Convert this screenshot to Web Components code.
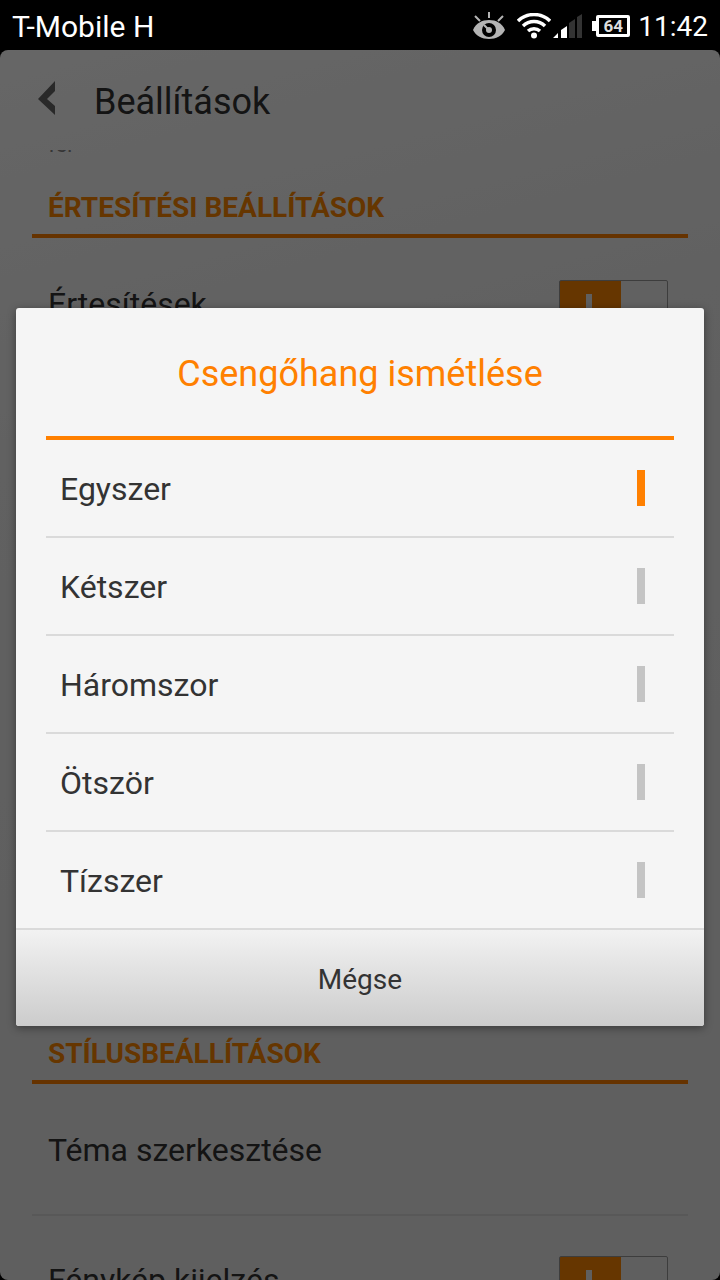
<!DOCTYPE html>
<html lang="hu">
<head>
  <meta charset="utf-8">
  <meta name="viewport" content="width=device-width, initial-scale=1">
  <title>Beállítások</title>
  <style>
    body {
      margin: 0;
      height: 100vh;
      overflow: hidden;
      background: #000;
      font-family: Roboto, "Liberation Sans", sans-serif;
    }
  </style>
</head>
<body>
  <phone-screen>
    <status-bar slot="status" carrier="T-Mobile H" battery="64" time="11:42"></status-bar>

    <settings-page heading="Beállítások">
      <span slot="previous">fel</span>
      <settings-section heading="Értesítési beállítások">
        <settings-row label="Értesítések" toggle></settings-row>
      </settings-section>
      <settings-section class="style" heading="Stílusbeállítások">
        <settings-row label="Téma szerkesztése"></settings-row>
        <settings-row label="Fénykép kijelzés" toggle></settings-row>
      </settings-section>
    </settings-page>

    <choice-dialog slot="dialog" heading="Csengőhang ismétlése" cancel="Mégse">
      <choice-list></choice-list>
    </choice-dialog>
  </phone-screen>

  <script>
    class PhoneScreen extends HTMLElement {
      constructor() {
        super();
        this.attachShadow({ mode: 'open' }).innerHTML = `
          <style>
            :host {
              display: flex;
              flex-direction: column;
              height: 100%;
            }

            main {
              flex: 1;
              min-height: 0;
              position: relative;
              display: flex;
            }

            .overlay {
              position: absolute;
              inset: 0;
              box-sizing: border-box;
              padding: 20px 16px 16px;
              display: grid;
              align-items: center;
              background: rgba(0, 0, 0, 0.6);
            }
          </style>

          <slot name="status"></slot>
          <main>
            <slot></slot>
            <div class="overlay"><slot name="dialog"></slot></div>
          </main>
        `;
      }
    }

    class StatusBar extends HTMLElement {
      connectedCallback() {
        this.attachShadow({ mode: 'open' }).innerHTML = `
          <style>
            :host {
              display: flex;
              align-items: center;
              height: 50px;
              padding: 2px 12px 0;
              box-sizing: border-box;
              color: #fff;
              font-size: 28px;
              line-height: 32px;
            }

            .carrier,
            time {
              padding-top: 2px;
            }

            .carrier {
              flex: 1;
              font-size: 30px;
            }

            svg {
              display: block;
            }

            .eye {
              margin-right: 12px;
            }

            .wifi {
              margin-right: 2px;
            }

            .signal {
              margin-right: 10px;
            }

            .battery {
              display: flex;
              align-items: center;
              margin-right: 8px;
            }

            .battery::before {
              content: "";
              width: 4px;
              height: 10px;
              background: #fff;
            }

            .battery span {
              box-sizing: border-box;
              width: 34px;
              height: 22px;
              border: 3px solid #fff;
              border-radius: 2px;
              color: #ddd;
              font-size: 17px;
              font-weight: 700;
              line-height: 16px;
              text-align: center;
            }
          </style>

          <span class="carrier">${this.getAttribute('carrier')}</span>
          <svg class="eye" width="32" height="28" viewBox="0 0 32 28" aria-hidden="true">
            <path fill="#b4b4b4" d="M0 18C3 11 9 8 16 8s13 3 16 10c-3 6-9 9-16 9S3 24 0 18z"/>
            <circle cx="16" cy="18" r="7" fill="#000"/>
            <circle cx="16" cy="18" r="3" fill="#b4b4b4"/>
            <path stroke="#b4b4b4" stroke-width="2" d="M16 0v6M2 4l5 5M30 4l-5 5M11 13l5 5"/>
          </svg>
          <svg class="wifi" width="34" height="26" viewBox="0 0 34 26" aria-hidden="true">
            <g fill="none" stroke="#fff" stroke-width="3.500">
              <path d="M1 8A23 23 0 0 1 33 8"/>
              <path d="M6 13A16 16 0 0 1 28 13"/>
              <path d="M11 18A9 9 0 0 1 23 18"/>
            </g>
            <circle cx="17" cy="22.500" r="3" fill="#fff"/>
          </svg>
          <svg class="signal" width="29" height="24" viewBox="0 0 29 24" aria-hidden="true">
            <path fill="#fff" d="M0 24l5-5v5zM8 24v-8l6-4v12z"/>
            <path fill="#333" d="M16 24V9l6-4v19zM24 24V3l5-3v24z"/>
          </svg>
          <div class="battery"><span>${this.getAttribute('battery')}</span></div>
          <time>${this.getAttribute('time')}</time>
        `;
      }
    }

    class SettingsPage extends HTMLElement {
      connectedCallback() {
        this.attachShadow({ mode: 'open' }).innerHTML = `
          <style>
            :host {
              flex: 1;
              min-width: 0;
              display: flex;
              flex-direction: column;
              overflow: hidden;
              border-radius: 8px;
              background: linear-gradient(165deg, #fff 0, #f2f2f2 30%, #eee 60%);
              color: #333;
            }

            header {
              flex: none;
              display: flex;
              align-items: center;
              height: 100px;
              padding: 0 36px;
              gap: 36px;
            }

            button {
              padding: 0 0 4px;
              border: 0;
              background: none;
            }

            svg {
              display: block;
            }

            h1 {
              margin: 0;
              padding-top: 4px;
              font-size: 36px;
              font-weight: 400;
              line-height: 44px;
            }

            .scroll {
              flex: 1;
              min-height: 0;
              overflow: hidden;
              padding: 0 32px;
            }

            .previous {
              display: flex;
              align-items: flex-end;
              height: 16px;
              padding: 0 16px 8px;
              box-sizing: border-box;
              color: #888;
              font-size: 22px;
              line-height: 26px;
            }

            .clip {
              overflow: hidden;
            }

            ::slotted(.style) {
              margin-top: 642px;
            }
          </style>

          <header>
            <button type="button" aria-label="Vissza">
              <svg width="22" height="36" viewBox="0 0 22 36">
                <path fill="#666" d="M19 1v10l-8 8l8 7v9L2 19z"/>
              </svg>
            </button>
            <h1>${this.getAttribute('heading')}</h1>
          </header>
          <div class="scroll">
            <div class="clip"><div class="previous"><slot name="previous"></slot></div></div>
            <slot></slot>
          </div>
        `;
      }
    }

    class SettingsSection extends HTMLElement {
      connectedCallback() {
        this.attachShadow({ mode: 'open' }).innerHTML = `
          <style>
            :host {
              display: block;
            }

            h2 {
              margin: 0;
              padding: 26px 16px 10px;
              border-bottom: 4px solid #ff8000;
              color: #ff8800;
              font-size: 28px;
              font-weight: 700;
              line-height: 32px;
              text-transform: uppercase;
            }

            .rows {
              padding-top: 2px;
            }
          </style>

          <h2>${this.getAttribute('heading')}</h2>
          <div class="rows"><slot></slot></div>
        `;
      }
    }

    class SettingsRow extends HTMLElement {
      connectedCallback() {
        const label = this.getAttribute('label');
        this.attachShadow({ mode: 'open' }).innerHTML = `
          <style>
            :host {
              display: block;
              border-bottom: 2px solid #dcdcdc;
            }

            label,
            button {
              display: flex;
              align-items: center;
              justify-content: space-between;
              box-sizing: border-box;
              width: 100%;
              height: 128px;
              padding: 0 20px 0 16px;
              border: 0;
              background: none;
              color: #333;
              font: 32px/40px Roboto, "Liberation Sans", sans-serif;
            }

            input {
              appearance: none;
              box-sizing: border-box;
              width: 109px;
              height: 48px;
              margin: 0;
              border: 1px solid #999;
              border-radius: 2px;
              background:
                linear-gradient(#eee, #eee) 26px 13px / 6px 20px no-repeat,
                linear-gradient(#ff8800, #ff8800) 0 0 / 61px 100% no-repeat;
            }
          </style>

          ${this.hasAttribute('toggle')
            ? `<label><span>${label}</span><input type="checkbox" checked></label>`
            : `<button type="button">${label}</button>`}
        `;
      }
    }

    class ChoiceDialog extends HTMLElement {
      connectedCallback() {
        this.attachShadow({ mode: 'open' }).innerHTML = `
          <style>
            :host {
              display: block;
              overflow: hidden;
              border-radius: 3px;
              background: #f5f5f5;
              box-shadow: 0 2px 8px rgba(0, 0, 0, 0.4);
              color: #333;
            }

            h2 {
              margin: 0 30px;
              padding: 46px 0 42px;
              border-bottom: 4px solid #ff8000;
              color: #ff8000;
              font-size: 36px;
              font-weight: 400;
              line-height: 40px;
              text-align: center;
            }

            .content {
              padding: 0 30px;
            }

            button {
              display: block;
              box-sizing: border-box;
              width: 100%;
              height: 98px;
              padding: 4px 0 0;
              border: 0;
              border-top: 2px solid #dadada;
              background: linear-gradient(#f2f2f2, #ccc);
              color: #333;
              font: 28px/32px Roboto, "Liberation Sans", sans-serif;
            }
          </style>

          <section role="dialog" aria-labelledby="title">
            <h2 id="title">${this.getAttribute('heading')}</h2>
            <div class="content"><slot></slot></div>
            <button type="button">${this.getAttribute('cancel')}</button>
          </section>
        `;
      }
    }

    class ChoiceList extends HTMLElement {
      constructor() {
        super();
        this.shadowDOM = this.attachShadow({ mode: 'open' });
      }

      set options(value) {
        this._options = value;
        this.render();
      }

      render() {
        this.shadowDOM.innerHTML = `
          <style>
            :host {
              display: block;
            }

            label {
              display: flex;
              align-items: center;
              justify-content: space-between;
              height: 96px;
              padding: 0 29px 0 14px;
              font-size: 32px;
              line-height: 40px;
            }

            label + label {
              border-top: 2px solid #dadada;
            }

            span {
              padding-top: 2px;
            }

            input {
              appearance: none;
              width: 8px;
              height: 36px;
              margin: 0;
              background: #c4c4c4;
            }

            input:checked {
              background: #ff8000;
            }
          </style>

          ${this._options.map((option, i) => `
            <label>
              <span>${option}</span>
              <input type="radio" name="repeat" ${i === 0 ? 'checked' : ''}>
            </label>
          `).join('')}
        `;
      }
    }

    customElements.define('phone-screen', PhoneScreen);
    customElements.define('status-bar', StatusBar);
    customElements.define('settings-page', SettingsPage);
    customElements.define('settings-section', SettingsSection);
    customElements.define('settings-row', SettingsRow);
    customElements.define('choice-dialog', ChoiceDialog);
    customElements.define('choice-list', ChoiceList);

    document.querySelector('choice-list').options = ['Egyszer', 'Kétszer', 'Háromszor', 'Ötször', 'Tízszer'];
  </script>
</body>
</html>
